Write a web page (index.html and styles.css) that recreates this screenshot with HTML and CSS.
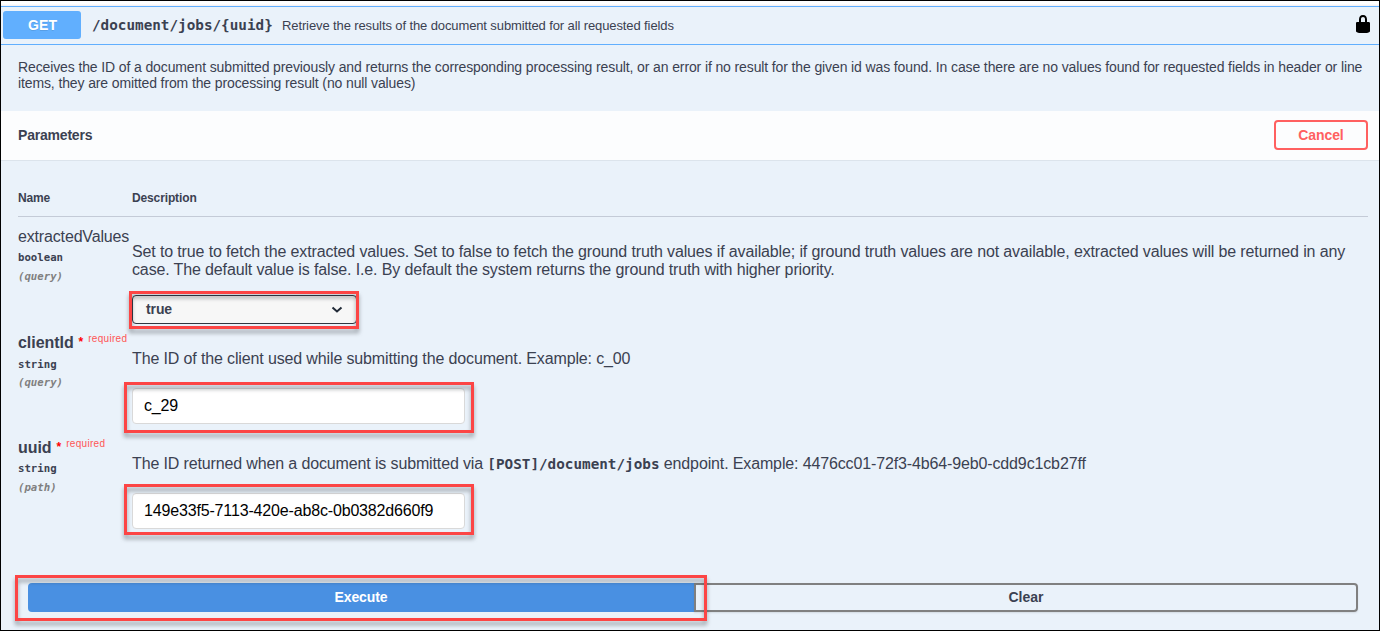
FILE: index.html
```html
<!DOCTYPE html>
<html lang="en">
<head>
<meta charset="utf-8">
<title>Document jobs API</title>
<link rel="stylesheet" href="styles.css">
</head>
<body>
<main class="operation">
  <header class="summary">
    <span class="method">GET</span>
    <span class="path">/document/jobs/{uuid}</span>
    <span class="summary-text">Retrieve the results of the document submitted for all requested fields</span>
    <svg class="lock" viewBox="0 0 20 20"><path d="M15.8 8H14V5.6C14 2.703 12.665 1 10 1 7.334 1 6 2.703 6 5.6V8H4c-.553 0-1 .646-1 1.199V17c0 .549.428 1.139.951 1.307l1.197.387C5.672 18.861 6.55 19 7.1 19h5.8c.549 0 1.428-.139 1.951-.307l1.196-.387c.524-.167.953-.757.953-1.306V9.199C17 8.646 16.352 8 15.8 8zM12 8H8V5.199C8 3.754 8.797 3 10 3c1.203 0 2 .754 2 2.199V8z"/></svg>
  </header>
  <p class="details">Receives the ID of a document submitted previously and returns the corresponding processing result, or an error if no result for the given id was found. In case there are no values found for requested fields in header or line items, they are omitted from the processing result (no null values)</p>
  <section class="section-header">
    <h4 class="section-title">Parameters</h4>
    <button class="cancel">Cancel</button>
  </section>
  <section class="parameters">
    <div class="row head"><span>Name</span><span>Description</span></div>
    <div class="row values">
      <div class="name-cell">
        <div class="name">extractedValues</div>
        <div class="type">boolean</div>
        <div class="location">(query)</div>
      </div>
      <div class="desc-cell">
        <p class="text">Set to true to fetch the extracted values. Set to false to fetch the ground truth values if available; if ground truth values are not available, extracted values will be returned in any case. The default value is false. I.e. By default the system returns the ground truth with higher priority.</p>
        <div class="control select">
          <span>true</span>
          <svg class="chevron" viewBox="0 0 12 8"><path d="M1.5 1.5 6 5.5l4.500-4"/></svg>
          <i class="mark mark-select"></i>
        </div>
      </div>
    </div>
    <div class="row client">
      <div class="name-cell">
        <div class="name needed">clientId<span class="star">*</span><span class="required">required</span></div>
        <div class="type">string</div>
        <div class="location">(query)</div>
      </div>
      <div class="desc-cell">
        <p class="text">The ID of the client used while submitting the document. Example: c_00</p>
        <div class="control input"><span>c_29</span><i class="mark mark-client"></i></div>
      </div>
    </div>
    <div class="row uuid">
      <div class="name-cell">
        <div class="name needed">uuid<span class="star">*</span><span class="required">required</span></div>
        <div class="type">string</div>
        <div class="location">(path)</div>
      </div>
      <div class="desc-cell">
        <p class="text">The ID returned when a document is submitted via <code>[POST]/document/jobs</code> endpoint. Example: 4476cc01-72f3-4b64-9eb0-cdd9c1cb27ff</p>
        <div class="control input"><span>149e33f5-7113-420e-ab8c-0b0382d660f9</span><i class="mark mark-uuid"></i></div>
      </div>
    </div>
  </section>
  <footer class="actions">
    <button class="execute">Execute</button>
    <button class="clear">Clear</button>
    <i class="mark mark-execute"></i>
  </footer>
</main>
</body>
</html>
```
FILE: styles.css
```css
* { box-sizing: border-box; }
body { margin: 0; font-family: "Liberation Sans", Arial, sans-serif; color: #3b4151; }
p, h4 { margin: 0; }
button { font: bold 14px "Liberation Sans", Arial, sans-serif; padding: 0; color: #3b4151; }

.operation { height: 631px; border: 1px solid #000; padding-top: 5px; background: linear-gradient(#fff 0, #fff 3px, #f0edf0 5px, #eaf2fa 5px); overflow: hidden; }

.summary { display: flex; align-items: center; height: 39px; padding: 0 6px 0 2px; border-top: 1px solid #61affe; border-bottom: 1px solid #61affe; }
.method { width: 78px; height: 28px; margin-top: -1px; padding-left: 1px; line-height: 28px; border-radius: 3px; background: #61affe; color: #fff; font-size: 14px; font-weight: bold; letter-spacing: .1px; text-align: center; text-shadow: 0 1px 0 rgba(0, 0, 0, .1); }
.path { width: 180px; margin: -2px 10px 0 11px; font: bold 14.3px "DejaVu Sans Mono", monospace; white-space: nowrap; }
.summary-text { flex: 1; font-size: 13px; letter-spacing: -.11px; }
.lock { width: 20px; height: 20px; margin-top: -4px; fill: #000; }

.details { height: 66px; padding: 14px 16px 0 17px; font-size: 14px; line-height: 16px; letter-spacing: -.12px; }

.section-header { display: flex; align-items: center; justify-content: space-between; height: 50px; padding: 0 11px 1px 17px; background: #fcfdfe; border-bottom: 1px solid #dce4ec; }
.section-title { font-size: 14px; letter-spacing: -.2px; }
.cancel { width: 94px; height: 30px; border: 2px solid #ff6060; border-radius: 4px; background: transparent; color: #ff6060; letter-spacing: -.1px; }

.parameters { padding: 20px 11px 0 17px; }
.row { display: grid; grid-template-columns: 114px 1fr; }
.head { height: 36px; padding-top: 10px; border-bottom: 1px solid #c4cbd7; font-size: 12px; font-weight: bold; line-height: 14px; letter-spacing: -.13px; }
.values { height: 106px; padding-top: 10px; }
.client { height: 105px; padding-top: 10px; }
.uuid { height: 104px; padding-top: 10px; }
.name { height: 20px; font-size: 16px; line-height: 20px; letter-spacing: -.16px; white-space: nowrap; }
.star { margin-left: 5px; color: #f00; font-size: 12px; line-height: 1; vertical-align: 2px; }
.needed { font-weight: bold; letter-spacing: -.05px; }
.required { margin-left: 5px; color: #ff5555; font-size: 10px; font-weight: normal; letter-spacing: .3px; line-height: 1; vertical-align: 6px; }
.type { padding-top: 3px; font: bold 10.7px/16px "DejaVu Sans Mono", monospace; }
.client .type { padding-top: 4px; }
.location { padding-top: 3px; color: #808080; font: italic bold 10.7px/16px "DejaVu Sans Mono", monospace; }
.client .location { padding-top: 2px; }
.text { padding-top: 16px; font-size: 16px; line-height: 18px; letter-spacing: -.135px; }
.client .text, .uuid .text { padding-top: 17px; }
.text code { font: bold 14.3px/16px "DejaVu Sans Mono", monospace; letter-spacing: 0; }

.control { position: relative; display: flex; align-items: center; }
.select { justify-content: space-between; width: 225px; height: 29px; margin-top: 16px; padding: 0 13px 1px; border: 1px solid #303642; border-radius: 4px; background: #f7f7f7; font-size: 14px; font-weight: bold; letter-spacing: -.1px; }
.chevron { width: 12px; height: 8px; margin-top: 2px; fill: none; stroke: #222b38; stroke-width: 2; }
.input { width: 333px; height: 36px; margin-top: 20px; padding: 0 11px 1px; border: 1px solid #d9d9d9; border-radius: 4px; background: #fff; color: #000; font-size: 16px; letter-spacing: -.16px; }

/* Annotation frames drawn over the controls */
.mark { position: absolute; border: 3px solid #fc4545; filter: drop-shadow(0 4px 2px rgba(40, 45, 50, .42)); }
.mark-select { left: -4px; top: -5px; width: 230px; height: 38px; }
.mark-client { left: -9px; top: -7px; width: 350px; height: 51px; }
.mark-uuid { left: -9px; top: -10px; width: 350px; height: 51px; }

.actions { position: relative; display: flex; margin: 51px 21px 0 27px; height: 29px; }
.execute { width: 666px; padding-bottom: 2px; border: 0; border-radius: 4px 0 0 4px; background: #4990e2; color: #fff; letter-spacing: -.1px; }
.clear { flex: 1; padding-bottom: 2px; border: 2px solid #808080; border-radius: 0 4px 4px 0; background: transparent; box-shadow: 0 1px 2px rgba(0, 0, 0, .1); }
.mark-execute { left: -13px; top: -8px; width: 692px; height: 46px; }
```
